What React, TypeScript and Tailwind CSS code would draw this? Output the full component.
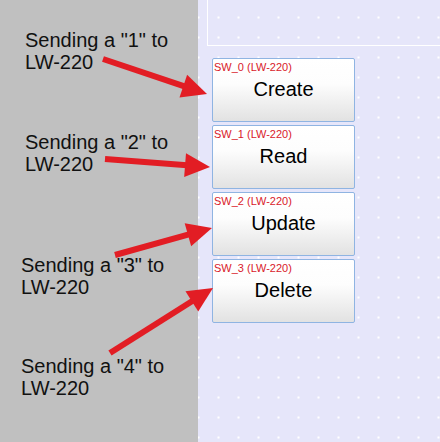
import React from 'react';

const notes = [
  { n: '1', cls: 'mt-[29px] ml-[25px]' },
  { n: '2', cls: 'mt-[58px] ml-[25px]' },
  { n: '3', cls: 'mt-[79px] ml-[21px]' },
  { n: '4', cls: 'mt-[57px] ml-[21px]' },
];

const buttons = [
  { id: 'SW_0', label: 'Create' },
  { id: 'SW_1', label: 'Read' },
  { id: 'SW_2', label: 'Update' },
  { id: 'SW_3', label: 'Delete' },
];

// tail -> tip
const arrows = [
  [103, 59, 207, 94],
  [105, 159, 210, 167],
  [115, 255, 212, 228],
  [110, 353, 213, 288],
];

const Arrow = ({ a }: { a: number[] }) => {
  const [x1, y1, x2, y2] = a;
  const dx = x2 - x1;
  const dy = y2 - y1;
  const len = Math.hypot(dx, dy);
  const ux = dx / len;
  const uy = dy / len;
  const L = 25;
  const W = 12;
  const bx = x2 - ux * L;
  const by = y2 - uy * L;
  const pts = `${x2},${y2} ${bx - uy * W},${by + ux * W} ${bx + uy * W},${by - ux * W}`;
  return (
    <g fill="#e21d24" stroke="#e21d24">
      <line x1={x1} y1={y1} x2={bx + ux * 2} y2={by + uy * 2} strokeWidth={6} />
      <polygon points={pts} strokeWidth={0} />
    </g>
  );
};

export default function App() {
  return (
    <div className="relative flex w-[440px] h-[442px] overflow-hidden font-['Liberation_Sans',Arial,sans-serif]">
      {/* left annotation column */}
      <div className="w-[198px] h-full bg-[#c0c0c0] flex flex-col shrink-0">
        {notes.map((t) => (
          <div key={t.n} className={`${t.cls} text-[20px] leading-[22px] text-[#111]`}>
            Sending a "{t.n}" to
            <br />
            LW-220
          </div>
        ))}
      </div>

      {/* HMI canvas */}
      <div className="flex-1 h-full bg-[#e6e6fa] bg-[radial-gradient(circle,#ffffff_0.75px,transparent_0.9px)] bg-[size:20px_20px] bg-[position:-9.5px_7.5px] flex flex-col">
        <div className="ml-[9px] h-[46px] border-l border-b border-white shrink-0" />
        <div className="ml-[14px] mt-[12px] flex flex-col gap-[3px]">
          {buttons.map((b) => (
            <div
              key={b.id}
              className="w-[143px] h-[64px] border border-[#8fb4e2] rounded-[2px] bg-[linear-gradient(to_bottom,#ffffff_0%,#fdfdfd_40%,#e2e2e2_100%)]"
            >
              <div className="pt-[2px] pl-[1px] text-[11px] leading-[13px] text-[#d9202a]">
                {b.id} (LW-220)
              </div>
              <div className="mt-[3px] text-center text-[20px] leading-[24px] text-black">
                {b.label}
              </div>
            </div>
          ))}
        </div>
      </div>

      {/* arrows drawn over both panels */}
      <svg className="absolute inset-0 pointer-events-none" width={440} height={442}>
        {arrows.map((a, i) => (
          <Arrow key={i} a={a} />
        ))}
      </svg>
    </div>
  );
}
